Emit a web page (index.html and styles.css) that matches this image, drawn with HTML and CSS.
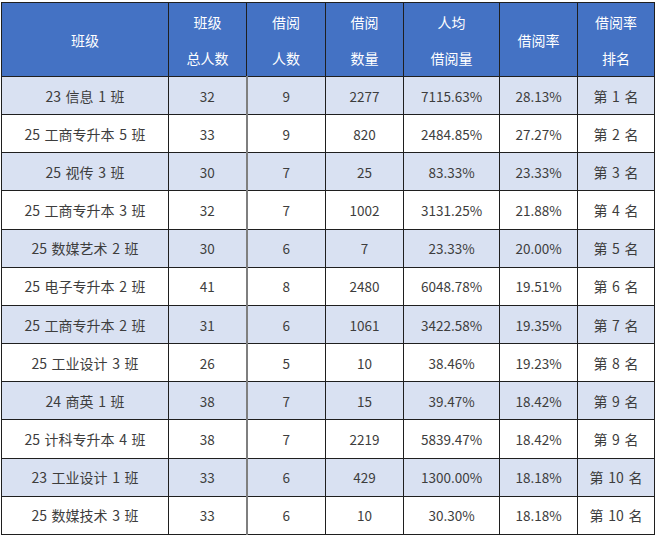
FILE: index.html
```html
<!DOCTYPE html>
<html lang="zh">
<head>
<meta charset="utf-8">
<link rel="stylesheet" href="styles.css">
</head>
<body>
<table class="rank">
  <colgroup>
    <col class="c-name"><col class="c-n"><col class="c-n2"><col class="c-n"><col class="c-avg"><col class="c-n"><col class="c-last">
  </colgroup>
  <thead>
    <tr>
      <th>班级</th>
      <th>班级<br>总人数</th>
      <th>借阅<br>人数</th>
      <th>借阅<br>数量</th>
      <th>人均<br>借阅量</th>
      <th>借阅率</th>
      <th>借阅率<br>排名</th>
    </tr>
  </thead>
  <tbody>
    <tr class="alt"><td>23 信息 1 班</td><td>32</td><td>9</td><td>2277</td><td>7115.63%</td><td>28.13%</td><td>第 1 名</td></tr>
    <tr><td>25 工商专升本 5 班</td><td>33</td><td>9</td><td>820</td><td>2484.85%</td><td>27.27%</td><td>第 2 名</td></tr>
    <tr class="alt"><td>25 视传 3 班</td><td>30</td><td>7</td><td>25</td><td>83.33%</td><td>23.33%</td><td>第 3 名</td></tr>
    <tr><td>25 工商专升本 3 班</td><td>32</td><td>7</td><td>1002</td><td>3131.25%</td><td>21.88%</td><td>第 4 名</td></tr>
    <tr class="alt"><td>25 数媒艺术 2 班</td><td>30</td><td>6</td><td>7</td><td>23.33%</td><td>20.00%</td><td>第 5 名</td></tr>
    <tr><td>25 电子专升本 2 班</td><td>41</td><td>8</td><td>2480</td><td>6048.78%</td><td>19.51%</td><td>第 6 名</td></tr>
    <tr class="alt"><td>25 工商专升本 2 班</td><td>31</td><td>6</td><td>1061</td><td>3422.58%</td><td>19.35%</td><td>第 7 名</td></tr>
    <tr><td>25 工业设计 3 班</td><td>26</td><td>5</td><td>10</td><td>38.46%</td><td>19.23%</td><td>第 8 名</td></tr>
    <tr class="alt"><td>24 商英 1 班</td><td>38</td><td>7</td><td>15</td><td>39.47%</td><td>18.42%</td><td>第 9 名</td></tr>
    <tr><td>25 计科专升本 4 班</td><td>38</td><td>7</td><td>2219</td><td>5839.47%</td><td>18.42%</td><td>第 9 名</td></tr>
    <tr class="alt"><td>23 工业设计 1 班</td><td>33</td><td>6</td><td>429</td><td>1300.00%</td><td>18.18%</td><td>第 10 名</td></tr>
    <tr><td>25 数媒技术 3 班</td><td>33</td><td>6</td><td>10</td><td>30.30%</td><td>18.18%</td><td>第 10 名</td></tr>
  </tbody>
</table>
</body>
</html>
```
FILE: styles.css
```css
html, body {
  margin: 0;
  padding: 0;
  background: #ffffff;
}
body {
  font-family: "Noto Sans CJK SC", "Noto Sans", sans-serif;
  color: #3d3d3d;
}
.rank {
  border-collapse: collapse;
  table-layout: fixed;
  width: 654px;
  margin: 2px 0 0 1px;
  font-size: 13.5px;
}
.c-name { width: 167px; }
.c-n { width: 78px; }
.c-n2 { width: 79px; }
.c-avg { width: 96px; }
.c-last { width: 77px; }
.rank th,
.rank td {
  border: 1px solid #1f1f1f;
  text-align: center;
  vertical-align: middle;
  padding: 0;
}
.rank th {
  background: #4472c4;
  color: #ffffff;
  font-weight: normal;
  font-size: 14px;
  line-height: 36px;
  height: 73px;
}
.rank td {
  height: 37.17px;
  line-height: 20px;
}
.rank td:first-child,
.rank td:last-child {
  font-size: 14px;
  word-spacing: 1.5px;
}
.rank td:nth-child(2) {
  border-right: 2px solid #7f7f7f;
}
.rank tr.alt td {
  background: #d9e1f2;
}
```
